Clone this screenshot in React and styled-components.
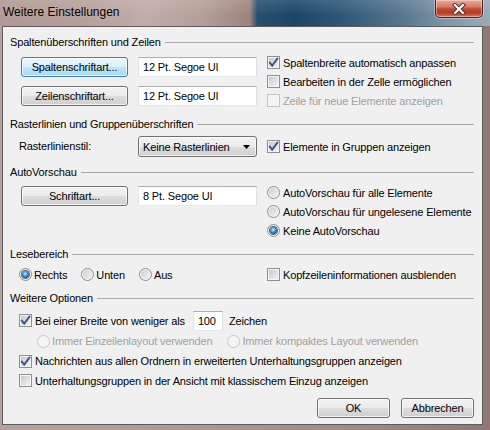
import React from "react";
import styled, { createGlobalStyle } from "styled-components";

const GlobalStyle = createGlobalStyle`
  html, body { margin: 0; padding: 0; background: #fff; }
  body {
    font-family: "Liberation Sans", Arial, sans-serif;
    font-size: 11px;
    letter-spacing: -0.15px;
    color: #000;
  }
  * { box-sizing: border-box; }
`;

/* ---------- window chrome ---------- */

const Window = styled.div`
  width: 490px;
  height: 430px;
  display: flex;
  flex-direction: column;
  background: linear-gradient(to right, #b9a29d 0%, #ae9690 45%, #a18983 75%, #8f7873 100%);
`;

const TitleBar = styled.div`
  height: 26px;
  flex: none;
  display: flex;
  justify-content: space-between;
  align-items: flex-start;
  padding: 0 7px 0 3px;
  background:
    linear-gradient(to bottom, rgba(255, 255, 255, 0.12), rgba(255, 255, 255, 0) 60%),
    linear-gradient(
      to right,
      #b09893 0%,
      #b7a09a 18%,
      #c1aca7 30%,
      #b49d97 42%,
      #9c837c 51%,
      #27506f 52.5%,
      #1b4567 60%,
      #2f5878 70%,
      #56768f 82%,
      #8299aa 92%,
      #9aabb8 100%
    );
`;

const Title = styled.span`
  font-size: 12px;
  line-height: 24px;
  letter-spacing: 0;
  color: #000;
  text-shadow: 0 0 6px rgba(255, 255, 255, 0.35);
`;

const CloseButton = styled.div`
  width: 48px;
  height: 18px;
  display: grid;
  place-items: center;
  border: 1px solid #4a2320;
  border-top: none;
  border-radius: 0 0 5px 5px;
  background: linear-gradient(
    to bottom,
    #e9ab9c 0%,
    #d67a65 40%,
    #c3492f 52%,
    #b63a22 75%,
    #d07a5f 100%
  );
  box-shadow: inset 0 0 0 1px rgba(255, 235, 230, 0.45), 0 0 0 1px rgba(255, 255, 255, 0.35);
`;

const Client = styled.div`
  flex: 1;
  margin: 0 7px 5px 2px;
  border: 1px solid #5c5c5c;
  background: #f0f0f0;
  padding: 8px 8px 0 7px;
  display: flex;
  flex-direction: column;
`;

/* ---------- groups ---------- */

const Group = styled.section`
  display: flex;
  flex-direction: column;
  & + & {
    margin-top: ${(p) => p.$gap ?? 7}px;
  }
`;

const GroupTitle = styled.div`
  display: flex;
  align-items: center;
  gap: 4px;
  height: 14px;
  line-height: 14px;
  &::after {
    content: "";
    flex: 1;
    height: 0;
    border-top: 1px solid #a9a9a9;
  }
`;

const GroupBody = styled.div`
  margin: ${(p) => p.$top ?? 4}px 0 0 9px;
  display: grid;
  grid-template-columns: 109px 119px 1fr;
  column-gap: 10px;
  align-items: ${(p) => p.$align || "start"};
  min-height: ${(p) => p.$height || 0}px;
`;

const FontPicker = styled.div`
  grid-column: 1 / 3;
  display: grid;
  grid-template-columns: 109px 119px;
  column-gap: 10px;
  row-gap: 9px;
  padding-top: ${(p) => p.$top}px;
`;

const OptionList = styled.div`
  display: flex;
  flex-direction: column;
`;

const Stack = styled.div`
  margin: 5px 0 0 9px;
  display: flex;
  flex-direction: column;
`;

const OptionRow = styled.label`
  display: flex;
  align-items: center;
  gap: ${(p) => p.$gap ?? 3}px;
  height: ${(p) => p.$h || 19}px;
  padding-left: ${(p) => p.$indent || 0}px;
  color: ${(p) => (p.$disabled ? "#a0a0a0" : "#000")};
  white-space: nowrap;
`;

const Choices = styled.div`
  display: flex;
  align-items: center;
  gap: ${(p) => p.$gap}px;
  height: ${(p) => p.$h || 19}px;
  padding-left: ${(p) => p.$indent || 0}px;
  grid-column: ${(p) => p.$span || "auto"};
`;

const FieldLabel = styled.span`
  line-height: 21px;
`;

const Suffix = styled.span`
  margin-left: ${(p) => p.$space}px;
`;

/* ---------- controls ---------- */

const Button = styled.button`
  font: inherit;
  letter-spacing: inherit;
  color: #000;
  height: 20px;
  width: ${(p) => p.$w || 107}px;
  margin: 0 0 0 ${(p) => p.$inset || 0}px;
  padding: 0;
  border: 1px solid ${(p) => (p.$focused ? "#3c7fb1" : "#707070")};
  border-radius: 3px;
  background: ${(p) =>
    p.$focused
      ? "linear-gradient(to bottom, #eaf6fd 0%, #d9f0fc 50%, #bee6fd 51%, #a7d9f5 100%)"
      : "linear-gradient(to bottom, #f2f2f2 0%, #ebebeb 50%, #dddddd 51%, #cfcfcf 100%)"};
  box-shadow: inset 0 0 0 1px rgba(255, 255, 255, 0.75);
  text-align: center;
`;

const TextBox = styled.div`
  height: 20px;
  width: ${(p) => p.$w || 119}px;
  margin-left: ${(p) => p.$space || 0}px;
  border: 1px solid;
  border-color: #abadb3 #dbdfe6 #e3e9ef #e2e3ea;
  background: #fff;
  padding: 0 4px;
  line-height: 18px;
  white-space: nowrap;
`;

const Select = styled.div`
  height: 21px;
  width: 119px;
  display: flex;
  align-items: center;
  justify-content: space-between;
  padding: 0 6px 0 4px;
  border: 1px solid #707070;
  border-radius: 3px;
  background: linear-gradient(to bottom, #f2f2f2 0%, #ebebeb 50%, #dddddd 51%, #cfcfcf 100%);
  box-shadow: inset 0 0 0 1px rgba(255, 255, 255, 0.75);
`;

const Box = styled.span`
  width: 13px;
  height: 13px;
  flex: none;
  display: grid;
  place-items: center;
  border: 1px solid ${(p) => (p.$disabled ? "#c3c3c3" : "#8e8f8f")};
  background: ${(p) =>
    p.$disabled
      ? "#f4f4f4"
      : "linear-gradient(135deg, #c0c5cb 0%, #dfe1e4 55%, #f5f5f6 100%)"};
  box-shadow: inset 0 0 0 1px #f6f6f6;
`;

const Dot = styled.span`
  width: 13px;
  height: 13px;
  flex: none;
  border-radius: 50%;
  display: grid;
  place-items: center;
  border: 1px solid ${(p) => (p.$disabled ? "#c6c6c6" : "#8e8f8f")};
  background: ${(p) =>
    p.$disabled
      ? "#f4f4f4"
      : "linear-gradient(135deg, #c6cacf 0%, #e2e3e5 55%, #f7f7f7 100%)"};
  box-shadow: inset 0 0 0 1px #f6f6f6;
  &::after {
    content: "";
    display: ${(p) => (p.$checked ? "block" : "none")};
    width: 7px;
    height: 7px;
    border-radius: 50%;
    background: radial-gradient(circle at 45% 40%, #d8f3ff 0%, #5fb6ea 28%, #1d62ad 62%, #0f3160 100%);
    box-shadow: 0 0 0 1px rgba(20, 45, 85, 0.7);
  }
`;

const Footer = styled.div`
  margin-top: 8px;
  display: flex;
  justify-content: flex-end;
  gap: 11px;
`;

/* ---------- small drawings ---------- */

const CheckMark = () => (
  <svg width="11" height="11" viewBox="0 0 11 11">
    <path
      d="M1.8 5.6 L4.2 8.6 L9.4 1.6"
      fill="none"
      stroke="#3f5588"
      strokeWidth="1.9"
      strokeLinecap="square"
      strokeLinejoin="miter"
    />
  </svg>
);

const Arrow = () => (
  <svg width="7" height="4" viewBox="0 0 7 4">
    <path d="M0 0 H7 L3.5 4 Z" fill="#000" />
  </svg>
);

const CloseGlyph = () => (
  <svg width="14" height="12" viewBox="0 0 14 12">
    <path d="M3 2 L11 10 M11 2 L3 10" stroke="#4a2a28" strokeWidth="4" strokeLinecap="square" />
    <path d="M3 2 L11 10 M11 2 L3 10" stroke="#fff" strokeWidth="2.2" strokeLinecap="square" />
  </svg>
);

const Check = ({ checked, disabled, children, ...rest }) => (
  <OptionRow $disabled={disabled} {...rest}>
    <Box $disabled={disabled}>{checked && <CheckMark />}</Box>
    <span>{children}</span>
  </OptionRow>
);

const Radio = ({ checked, disabled, children, gap = 3, h }) => (
  <OptionRow $disabled={disabled} $gap={gap} $h={h}>
    <Dot $checked={checked} $disabled={disabled} />
    <span>{children}</span>
  </OptionRow>
);

/* ---------- dialog ---------- */

export default function App() {
  return (
    <>
      <GlobalStyle />
      <Window>
        <TitleBar>
          <Title>Weitere Einstellungen</Title>
          <CloseButton>
            <CloseGlyph />
          </CloseButton>
        </TitleBar>

        <Client>
          <Group>
            <GroupTitle>Spaltenüberschriften und Zeilen</GroupTitle>
            <GroupBody>
              <FontPicker $top={4}>
                <Button $focused $inset={2}>Spaltenschriftart...</Button>
                <TextBox>12 Pt. Segoe UI</TextBox>
                <Button $inset={2}>Zeilenschriftart...</Button>
                <TextBox>12 Pt. Segoe UI</TextBox>
              </FontPicker>
              <OptionList>
                <Check checked>Spaltenbreite automatisch anpassen</Check>
                <Check>Bearbeiten in der Zelle ermöglichen</Check>
                <Check disabled>Zeile für neue Elemente anzeigen</Check>
              </OptionList>
            </GroupBody>
          </Group>

          <Group>
            <GroupTitle>Rasterlinien und Gruppenüberschriften</GroupTitle>
            <GroupBody $align="center" $height={23}>
              <FieldLabel>Rasterlinienstil:</FieldLabel>
              <Select>
                <span>Keine Rasterlinien</span>
                <Arrow />
              </Select>
              <Check checked $h={21}>Elemente in Gruppen anzeigen</Check>
            </GroupBody>
          </Group>

          <Group>
            <GroupTitle>AutoVorschau</GroupTitle>
            <GroupBody>
              <FontPicker $top={3}>
                <Button $inset={2}>Schriftart...</Button>
                <TextBox>8 Pt. Segoe UI</TextBox>
              </FontPicker>
              <OptionList>
                <Radio>AutoVorschau für alle Elemente</Radio>
                <Radio>AutoVorschau für ungelesene Elemente</Radio>
                <Radio checked>Keine AutoVorschau</Radio>
              </OptionList>
            </GroupBody>
          </Group>

          <Group>
            <GroupTitle>Lesebereich</GroupTitle>
            <GroupBody $align="center">
              <Choices $gap={14} $span="1 / 3" $h={19}>
                <Radio checked gap={2} h={19}>Rechts</Radio>
                <Radio gap={2} h={19}>Unten</Radio>
                <Radio gap={2} h={19}>Aus</Radio>
              </Choices>
              <Check $h={19}>Kopfzeileninformationen ausblenden</Check>
            </GroupBody>
          </Group>

          <Group>
            <GroupTitle>Weitere Optionen</GroupTitle>
            <Stack>
              <OptionRow $h={21}>
                <Box>
                  <CheckMark />
                </Box>
                <span>Bei einer Breite von weniger als</span>
                <TextBox $w={30} $space={5}>100</TextBox>
                <Suffix $space={3}>Zeichen</Suffix>
              </OptionRow>
              <Choices $gap={15} $indent={18} $h={20}>
                <Radio disabled gap={2} h={20}>Immer Einzeilenlayout verwenden</Radio>
                <Radio disabled gap={2} h={20}>Immer kompaktes Layout verwenden</Radio>
              </Choices>
              <Check checked $h={20}>Nachrichten aus allen Ordnern in erweiterten Unterhaltungsgruppen anzeigen</Check>
              <Check $h={19}>Unterhaltungsgruppen in der Ansicht mit klassischem Einzug anzeigen</Check>
            </Stack>
          </Group>

          <Footer>
            <Button $w={73}>OK</Button>
            <Button $w={73}>Abbrechen</Button>
          </Footer>
        </Client>
      </Window>
    </>
  );
}
